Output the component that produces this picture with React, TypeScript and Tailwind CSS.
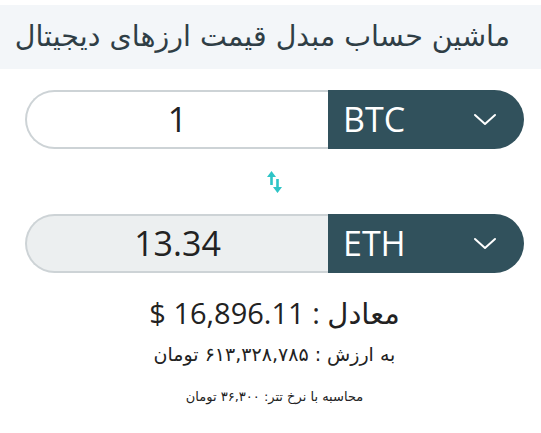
import React from "react";

const Chevron = () => (
  <svg width="24" height="14" viewBox="0 0 24 14" fill="none">
    <path d="M2 2 L12 11 L22 2" stroke="white" strokeWidth="2" strokeLinecap="round" strokeLinejoin="round" />
  </svg>
);

const SwapIcon = () => (
  <svg width="15" height="24" viewBox="0 0 15 24">
    <path d="M4.5 1 L0 7 H3.2 V15 H5.8 V7 H9 Z" fill="#2ec4c6" />
    <path d="M10.5 23 L15 17 H11.8 V9 H9.2 V17 H6 Z" fill="#2ec4c6" />
  </svg>
);

function Row({ value, code, filled }: { value: string; code: string; filled?: boolean }) {
  return (
    <div className="flex h-[59px] w-[499px]" dir="ltr">
      <div
        className={`flex w-[303px] items-center justify-center rounded-l-full border-2 border-r-0 border-[#cdd3d6] text-[34px] text-[#222] ${filled ? "bg-[#eceff0]" : "bg-white"}`}
        style={{ fontFamily: '"Open Sans", sans-serif' }}
      >
        {value}
      </div>
      <div className="flex flex-1 items-center justify-between rounded-r-full bg-[#31515c] pl-[15px] pr-[27px] text-[34px] text-white" style={{ fontFamily: '"Open Sans", sans-serif' }}>
        <span>{code}</span>
        <Chevron />
      </div>
    </div>
  );
}

export default function App() {
  return (
    <div className="w-[541px] bg-white pt-[5px]" dir="rtl" style={{ fontFamily: '"DejaVu Sans", sans-serif' }}>
      <div className="flex h-[64px] items-center bg-[#f3f6f9] pr-[31px] text-[28.5px] text-[#2f3e46]">
        ماشین حساب مبدل قیمت ارزهای دیجیتال
      </div>
      <div className="flex flex-col items-center pl-[8px]">
        <div className="mt-[21px]">
          <Row value="1" code="BTC" />
        </div>
        <div className="flex h-[65px] items-center justify-center">
          <SwapIcon />
        </div>
        <Row value="13.34" code="ETH" filled />
        <div className="mt-[18px] text-[29px] text-[#222]" style={{ fontFamily: '"Open Sans", "DejaVu Sans", sans-serif' }}>
          معادل : 16,896.11 $
        </div>
        <div className="mt-[5px] text-[19px] text-[#222]">
          به ارزش : ۶۱۳,۳۲۸,۷۸۵ تومان
        </div>
        <div className="mt-[19px] text-[13px] text-[#222]">
          محاسبه با نرخ تتر: ۳۶,۳۰۰ تومان
        </div>
      </div>
    </div>
  );
}
